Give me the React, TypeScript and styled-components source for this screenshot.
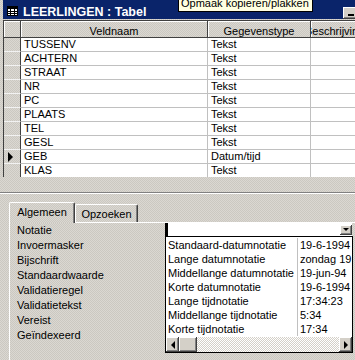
import React from "react";
import styled, { createGlobalStyle, css } from "styled-components";

const dither = css`
  background-color: #d4d0c8;
  background-image: repeating-conic-gradient(#dbd8d2 0% 25%, #cbc8c1 0% 50%);
  background-size: 2px 2px;
`;

const raised = css`
  background: #d4d0c8;
  box-shadow: inset -1px -1px #404040, inset 1px 1px #ffffff, inset -2px -2px #808080;
`;

const GlobalStyle = createGlobalStyle`
  html, body { margin: 0; padding: 0; background: #d4d0c8; }
  body {
    font-family: "Liberation Sans", Arial, sans-serif;
    font-size: 11px;
    color: #000;
  }
  * { box-sizing: border-box; }
`;

const Window = styled.div`
  position: relative;
  width: 355px;
  height: 360px;
  overflow: hidden;
  display: flex;
  flex-direction: column;
  ${dither}
`;

const TopPart = styled.div`
  padding-left: 3px;
  flex: none;
`;

const TitleBar = styled.div`
  height: 19px;
  background: #0a246a;
  display: flex;
  align-items: flex-start;
  padding: 6px 0 0 4px;
  margin-bottom: 1px;
  overflow: hidden;
`;

const TitleText = styled.span`
  flex: none;
  margin-left: 5px;
  margin-top: -1px;
  color: #fff;
  font-weight: bold;
  font-size: 12.5px;
  line-height: 15px;
  white-space: nowrap;
`;

const CaptionButtons = styled.div`
  flex: none;
  align-self: flex-end;
  margin-left: auto;
  margin-right: -38px;
  display: flex;
`;

const CaptionButton = styled.div<{ $gap?: boolean }>`
  ${raised}
  width: 16px;
  height: 12px;
  position: relative;
  margin-left: ${(p) => (p.$gap ? "2px" : "0")};
`;

const MinGlyph = styled.span`
  position: absolute;
  left: 5px;
  bottom: 3px;
  width: 6px;
  height: 2px;
  background: #000;
`;

const MaxGlyph = styled.span`
  position: absolute;
  left: 3px;
  top: 2px;
  width: 9px;
  height: 7px;
  border: 1px solid #000;
  border-top-width: 2px;
`;

const Tooltip = styled.div`
  position: absolute;
  left: 178px;
  top: -6px;
  height: 18px;
  padding: 0 3px 0 2px;
  border: 1px solid #000;
  background: #ffffe1;
  line-height: 16px;
  white-space: nowrap;
  z-index: 5;
`;

const GridArea = styled.div`
  height: 157px;
  border-top: 1px solid #404040;
  border-left: 1px solid #404040;
  overflow: hidden;
  background: #fff;
`;

const Grid = styled.div`
  display: grid;
  grid-template-columns: 17px 187px 103px 60px;
  grid-template-rows: 17px;
  grid-auto-rows: 14px;
`;

const HeaderCell = styled.div<{ $align?: "left" | "center" }>`
  ${dither}
  border-right: 1px solid #404040;
  border-bottom: 1px solid #404040;
  box-shadow: inset 1px 1px #ffffff;
  text-align: ${(p) => p.$align ?? "center"};
  padding-top: 3px;
  line-height: 14px;
  white-space: nowrap;
  overflow: hidden;
`;

const ClippedLabel = styled.span`
  display: inline-block;
  margin-left: -6px;
`;

const SelectorCell = styled.div`
  ${dither}
  border-right: 1px solid #404040;
  border-bottom: 1px solid #f2f2f2;
  display: flex;
  align-items: center;
  padding-left: 4px;
`;

const DataCell = styled.div`
  background: #fff;
  border-right: 1px solid #c0c0c0;
  border-bottom: 1px solid #c0c0c0;
  padding-left: 3px;
  line-height: 13px;
  white-space: nowrap;
  overflow: hidden;
`;

const Splitter = styled.div`
  flex: none;
  margin-top: 15px;
  height: 2px;
  border-top: 1px solid #808080;
  border-bottom: 1px solid #ffffff;
`;

const Tabs = styled.div`
  flex: none;
  margin-top: 8px;
  height: 20px;
  padding-left: 9px;
  display: flex;
  align-items: flex-end;
`;

const Tab = styled.div<{ $active?: boolean }>`
  ${dither}
  position: relative;
  z-index: ${(p) => (p.$active ? 2 : 1)};
  width: ${(p) => (p.$active ? "66px" : "63px")};
  height: ${(p) => (p.$active ? "21px" : "18px")};
  margin-bottom: ${(p) => (p.$active ? "-1px" : "0")};
  border-top: 1px solid #ffffff;
  border-left: 1px solid #ffffff;
  border-right: 1px solid #404040;
  border-radius: 2px 2px 0 0;
  box-shadow: inset -1px 0 #808080;
  padding-top: 2px;
  line-height: 14px;
  text-align: center;
  white-space: nowrap;
`;

const Panel = styled.div`
  flex: 1;
  margin-left: 9px;
  border-top: 1px solid #ffffff;
  border-left: 1px solid #ffffff;
  display: grid;
  grid-template-columns: 148px 188px;
  padding-left: 7px;
  align-items: start;
`;

const Labels = styled.div`
  display: flex;
  flex-direction: column;
`;

const Label = styled.div`
  height: 15px;
  line-height: 15px;
  white-space: nowrap;
`;

const Combo = styled.div`
  display: flex;
  flex-direction: column;
`;

const ComboInput = styled.div`
  width: 187px;
  height: 13px;
  background: #fff;
  display: flex;
  align-items: center;
`;

const Caret = styled.span`
  align-self: stretch;
  width: 3px;
  background: #000;
`;

const DropButton = styled.div`
  ${raised}
  margin-left: auto;
  width: 12px;
  height: 10px;
  display: flex;
  align-items: center;
  justify-content: center;
`;

const Arrow = styled.span<{ $dir: "down" | "left" | "right" }>`
  width: 0;
  height: 0;
  border-style: solid;
  ${(p) =>
    p.$dir === "down"
      ? css`
          border-width: 3px 3px 0 3px;
          border-color: #000 transparent transparent transparent;
        `
      : p.$dir === "left"
      ? css`
          border-width: 4px 4px 4px 0;
          border-color: transparent #000 transparent transparent;
        `
      : css`
          border-width: 4px 0 4px 4px;
          border-color: transparent transparent transparent #000;
        `}
`;

const DropList = styled.div`
  width: 188px;
  border: 1px solid #000;
  background: #fff;
  padding-top: 1px;
`;

const ListRows = styled.div`
  display: grid;
  grid-template-columns: 132px 1fr;
  grid-auto-rows: 14px;
`;

const ListCell = styled.div<{ $first?: boolean }>`
  line-height: 14px;
  padding-left: 2px;
  border-right: ${(p) => (p.$first ? "1px solid #c0c0c0" : "none")};
  white-space: nowrap;
  overflow: hidden;
`;

const ScrollBar = styled.div`
  margin-top: 1px;
  height: 15px;
  display: flex;
`;

const ScrollButton = styled.div`
  ${raised}
  width: 13px;
  flex: none;
  display: flex;
  align-items: center;
  justify-content: center;
`;

const Thumb = styled.div`
  ${raised}
  width: 18px;
  flex: none;
`;

const Track = styled.div`
  flex: 1;
  background-color: #ffffff;
  background-image: repeating-conic-gradient(#d4d0c8 0% 25%, #ffffff 0% 50%);
  background-size: 2px 2px;
`;

const TableIcon = () => (
  <svg width="11" height="10" viewBox="0 0 11 10" style={{ flex: "none" }}>
    <rect x="0.5" y="0.5" width="10" height="9" fill="#fff" stroke="#000" />
    <rect x="0" y="0" width="11" height="3" fill="#000" />
    <path d="M0 5.5H11M0 7.5H11M3.5 3V10M7.5 3V10" stroke="#000" strokeWidth="1" />
  </svg>
);

const RowPointer = () => (
  <svg width="6" height="10" viewBox="0 0 6 10">
    <polygon points="0,0 5,5 0,10" fill="#000" />
  </svg>
);

const fields = [
  ["TUSSENV", "Tekst"],
  ["ACHTERN", "Tekst"],
  ["STRAAT", "Tekst"],
  ["NR", "Tekst"],
  ["PC", "Tekst"],
  ["PLAATS", "Tekst"],
  ["TEL", "Tekst"],
  ["GESL", "Tekst"],
  ["GEB", "Datum/tijd"],
  ["KLAS", "Tekst"],
];

const properties = [
  "Notatie",
  "Invoermasker",
  "Bijschrift",
  "Standaardwaarde",
  "Validatieregel",
  "Validatietekst",
  "Vereist",
  "Geïndexeerd",
];

const formats = [
  ["Standaard-datumnotatie", "19-6-1994"],
  ["Lange datumnotatie", "zondag 19 juni 1994"],
  ["Middellange datumnotatie", "19-jun-94"],
  ["Korte datumnotatie", "19-6-1994"],
  ["Lange tijdnotatie", "17:34:23"],
  ["Middellange tijdnotatie", "5:34"],
  ["Korte tijdnotatie", "17:34"],
];

export default function App() {
  return (
    <>
      <GlobalStyle />
      <Window>
        <TopPart>
          <TitleBar>
            <TableIcon />
            <TitleText>LEERLINGEN : Tabel</TitleText>
            <CaptionButtons>
              <CaptionButton>
                <MinGlyph />
              </CaptionButton>
              <CaptionButton>
                <MaxGlyph />
              </CaptionButton>
              <CaptionButton $gap />
            </CaptionButtons>
          </TitleBar>
          <GridArea>
            <Grid>
              <HeaderCell />
              <HeaderCell>Veldnaam</HeaderCell>
              <HeaderCell>Gegevenstype</HeaderCell>
              <HeaderCell $align="left">
                <ClippedLabel>Beschrijving</ClippedLabel>
              </HeaderCell>
              {fields.map(([name, type]) => (
                <React.Fragment key={name}>
                  <SelectorCell>{name === "GEB" && <RowPointer />}</SelectorCell>
                  <DataCell>{name}</DataCell>
                  <DataCell>{type}</DataCell>
                  <DataCell />
                </React.Fragment>
              ))}
            </Grid>
          </GridArea>
        </TopPart>
        <Tooltip>Opmaak kopieren/plakken</Tooltip>
        <Splitter />
        <Tabs>
          <Tab $active>Algemeen</Tab>
          <Tab>Opzoeken</Tab>
        </Tabs>
        <Panel>
          <Labels>
            {properties.map((p) => (
              <Label key={p}>{p}</Label>
            ))}
          </Labels>
          <Combo>
            <ComboInput>
              <Caret />
              <DropButton>
                <Arrow $dir="down" />
              </DropButton>
            </ComboInput>
            <DropList>
              <ListRows>
                {formats.map(([name, sample]) => (
                  <React.Fragment key={name}>
                    <ListCell $first>{name}</ListCell>
                    <ListCell>{sample}</ListCell>
                  </React.Fragment>
                ))}
              </ListRows>
              <ScrollBar>
                <ScrollButton>
                  <Arrow $dir="left" />
                </ScrollButton>
                <Thumb />
                <Track />
                <ScrollButton>
                  <Arrow $dir="right" />
                </ScrollButton>
              </ScrollBar>
            </DropList>
          </Combo>
        </Panel>
      </Window>
    </>
  );
}
